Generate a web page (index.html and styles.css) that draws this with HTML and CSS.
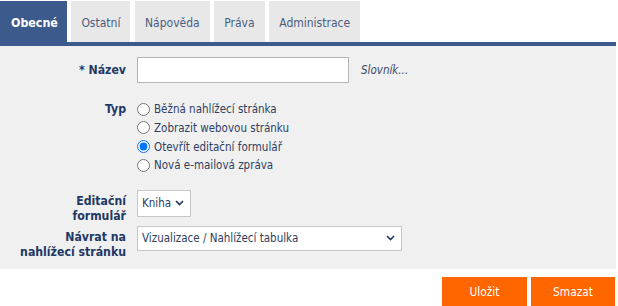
FILE: index.html
```html
<!DOCTYPE html>
<html lang="cs">
<head>
<meta charset="utf-8">
<title>Obecné</title>
<link rel="stylesheet" href="styles.css">
</head>
<body>
<div class="page">
  <div class="tabs">
    <div class="tab active">Obecné</div>
    <div class="tab">Ostatní</div>
    <div class="tab">Nápověda</div>
    <div class="tab">Práva</div>
    <div class="tab">Administrace</div>
  </div>
  <div class="panel">
    <div class="row row-name">
      <div class="label">* Název</div>
      <div class="field">
        <input class="text" type="text">
        <span class="dict">Slovník...</span>
      </div>
    </div>
    <div class="row row-type">
      <div class="label label-typ">Typ</div>
      <div class="radios">
        <label class="radio"><input type="radio" name="typ"><span>Běžná nahlížecí stránka</span></label>
        <label class="radio"><input type="radio" name="typ"><span>Zobrazit webovou stránku</span></label>
        <label class="radio"><input type="radio" name="typ" checked><span>Otevřít editační formulář</span></label>
        <label class="radio"><input type="radio" name="typ"><span>Nová e-mailová zpráva</span></label>
      </div>
    </div>
    <div class="row row-form">
      <div class="label label-multi">Editační<br>formulář</div>
      <div class="select select-small">
        <span class="select-text">Kniha</span>
        <svg class="chev" width="9" height="6" viewBox="0 0 9 6"><path d="M1 1 L4.5 4.5 L8 1" fill="none" stroke="#1f3864" stroke-width="1.6"/></svg>
      </div>
    </div>
    <div class="row row-return">
      <div class="label label-multi">Návrat na<br>nahlížecí stránku</div>
      <div class="select select-wide">
        <span class="select-text">Vizualizace / Nahlížecí tabulka</span>
        <svg class="chev" width="9" height="6" viewBox="0 0 9 6"><path d="M1 1 L4.5 4.5 L8 1" fill="none" stroke="#1f3864" stroke-width="1.6"/></svg>
      </div>
    </div>
  </div>
  <div class="actions">
    <button class="btn">Uložit</button>
    <button class="btn">Smazat</button>
  </div>
</div>
</body>
</html>
```
FILE: styles.css
```css
html, body {
  margin: 0;
  padding: 0;
  background: #ffffff;
}

body {
  font-family: "DejaVu Sans Condensed", "Liberation Sans", Arial, sans-serif;
  font-size: 11.5px;
  color: #2e3f63;
}

.page {
  width: 616px;
  padding-top: 1px;
}

.tabs {
  display: flex;
  gap: 4.6px;
  border-bottom: 4px solid #3c5a8b;
}

.tab {
  height: 41px;
  box-sizing: border-box;
  padding: 2px 10px 0;
  display: flex;
  align-items: center;
  background: #e8e8e8;
  color: #4b5e80;
  font-size: 12px;
}

.tab.active {
  background: #3c5a8b;
  color: #ffffff;
  font-weight: bold;
  font-size: 12.3px;
  padding: 2px 9px 0 11px;
}

.panel {
  background: #f0f0f0;
  padding: 11px 0 8.5px 1px;
}

.row {
  display: grid;
  grid-template-columns: 125px 1fr;
  column-gap: 11px;
}

.label {
  text-align: right;
  font-weight: bold;
  font-size: 12.2px;
  color: #1f3864;
  line-height: 15px;
}

.row-name {
  align-items: center;
}

.field {
  display: flex;
  align-items: center;
  gap: 12px;
}

.text {
  width: 212px;
  height: 26px;
  box-sizing: border-box;
  border: 1px solid #b5b5b5;
  background: #ffffff;
  margin: 0;
  padding: 0 4px;
  outline: none;
}

.dict {
  font-style: italic;
  color: #3b4a6b;
}

.row-type {
  margin-top: 17px;
}

.label-typ {
  line-height: 18.67px;
}

.radios {
  display: flex;
  flex-direction: column;
}

.radio {
  height: 18.67px;
  display: flex;
  align-items: center;
  gap: 4px;
  color: #2e3f63;
}

.radio input {
  margin: 0;
  width: 13px;
  height: 13px;
}

.row-form {
  margin-top: 15.3px;
  align-items: start;
}

.row-return {
  margin-top: 1.5px;
  align-items: start;
}

.label-multi {
  padding-top: 4.5px;
}

.select {
  position: relative;
  box-sizing: border-box;
  background: #ffffff;
  border: 1px solid #c8c8c8;
  display: flex;
  align-items: center;
  padding-left: 4px;
  color: #2e3f63;
}

.select-small {
  width: 54px;
  height: 27px;
}

.select-wide {
  width: 265px;
  height: 25px;
}

.chev {
  position: absolute;
  right: 6px;
  top: 50%;
  margin-top: -3px;
}

.actions {
  display: flex;
  justify-content: flex-end;
  gap: 4px;
  margin-top: 8px;
  padding-right: 1px;
}

.btn {
  width: 85px;
  height: 30px;
  border: none;
  background: #ff6600;
  color: #ffffff;
  font-family: "DejaVu Sans Condensed", "Liberation Sans", Arial, sans-serif;
  font-size: 11.8px;
  padding: 0;
  margin: 0;
}

.btn + .btn {
  width: 84px;
}
```
